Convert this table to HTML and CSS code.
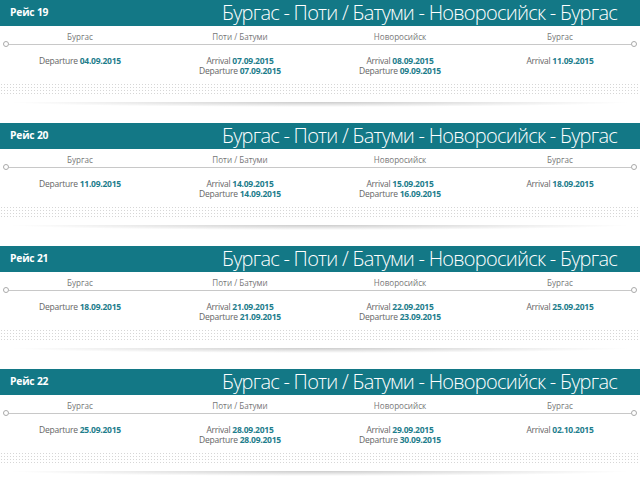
FILE: index.html
```html
<!DOCTYPE html>
<html lang="ru">
<head>
<meta charset="utf-8">
<link rel="stylesheet" href="styles.css">
</head>
<body>
<div class="trips">
  <section class="trip">
    <header class="trip-head"><span class="trip-no">Рейс 19</span><span class="trip-route">Бургас - Поти / Батуми - Новоросийск - Бургас</span></header>
    <div class="ports"><span>Бургас</span><span>Поти / Батуми</span><span>Новоросийск</span><span>Бургас</span></div>
    <div class="track"><i class="dot"></i><i class="line"></i><i class="dot"></i></div>
    <div class="dates">
      <div>Departure <b>04.09.2015</b></div>
      <div>Arrival <b>07.09.2015</b><br>Departure <b>07.09.2015</b></div>
      <div>Arrival <b>08.09.2015</b><br>Departure <b>09.09.2015</b></div>
      <div>Arrival <b>11.09.2015</b></div>
    </div>
    <div class="dots"></div>
    <div class="shadow"></div>
  </section>
  <section class="trip">
    <header class="trip-head"><span class="trip-no">Рейс 20</span><span class="trip-route">Бургас - Поти / Батуми - Новоросийск - Бургас</span></header>
    <div class="ports"><span>Бургас</span><span>Поти / Батуми</span><span>Новоросийск</span><span>Бургас</span></div>
    <div class="track"><i class="dot"></i><i class="line"></i><i class="dot"></i></div>
    <div class="dates">
      <div>Departure <b>11.09.2015</b></div>
      <div>Arrival <b>14.09.2015</b><br>Departure <b>14.09.2015</b></div>
      <div>Arrival <b>15.09.2015</b><br>Departure <b>16.09.2015</b></div>
      <div>Arrival <b>18.09.2015</b></div>
    </div>
    <div class="dots"></div>
    <div class="shadow"></div>
  </section>
  <section class="trip">
    <header class="trip-head"><span class="trip-no">Рейс 21</span><span class="trip-route">Бургас - Поти / Батуми - Новоросийск - Бургас</span></header>
    <div class="ports"><span>Бургас</span><span>Поти / Батуми</span><span>Новоросийск</span><span>Бургас</span></div>
    <div class="track"><i class="dot"></i><i class="line"></i><i class="dot"></i></div>
    <div class="dates">
      <div>Departure <b>18.09.2015</b></div>
      <div>Arrival <b>21.09.2015</b><br>Departure <b>21.09.2015</b></div>
      <div>Arrival <b>22.09.2015</b><br>Departure <b>23.09.2015</b></div>
      <div>Arrival <b>25.09.2015</b></div>
    </div>
    <div class="dots"></div>
    <div class="shadow"></div>
  </section>
  <section class="trip">
    <header class="trip-head"><span class="trip-no">Рейс 22</span><span class="trip-route">Бургас - Поти / Батуми - Новоросийск - Бургас</span></header>
    <div class="ports"><span>Бургас</span><span>Поти / Батуми</span><span>Новоросийск</span><span>Бургас</span></div>
    <div class="track"><i class="dot"></i><i class="line"></i><i class="dot"></i></div>
    <div class="dates">
      <div>Departure <b>25.09.2015</b></div>
      <div>Arrival <b>28.09.2015</b><br>Departure <b>28.09.2015</b></div>
      <div>Arrival <b>29.09.2015</b><br>Departure <b>30.09.2015</b></div>
      <div>Arrival <b>02.10.2015</b></div>
    </div>
    <div class="dots"></div>
    <div class="shadow"></div>
  </section>
</div>
</body>
</html>
```
FILE: styles.css
```css
* { box-sizing: border-box; }
html, body { margin: 0; padding: 0; background: #fff; }
body { font-family: "Open Sans", "Noto Sans", sans-serif; color: #666; width: 640px; overflow: hidden; }
.trips { display: flex; flex-direction: column; }
.trip { height: 123px; display: flex; flex-direction: column; }
.trip-head {
  height: 26px;
  background: #137886;
  color: #fff;
  display: flex;
  align-items: center;
  justify-content: space-between;
  padding: 0 23px 0 10px;
  white-space: nowrap;
}
.trip-no { font-size: 10.3px; font-weight: 700; letter-spacing: -0.2px; margin-top: -3px; }
.trip-route { font-size: 20px; font-weight: 300; letter-spacing: -0.75px; margin-top: -1px; line-height: 26px; }
.ports {
  display: grid;
  grid-template-columns: repeat(4, 1fr);
  text-align: center;
  font-size: 8.1px;
  color: #777;
  padding-top: 6px;
  height: 15px;
  line-height: 10px;
}
.track { display: flex; align-items: center; height: 6px; padding: 0 3px; }
.track .dot { width: 6px; height: 6px; border: 1px solid #aaa; border-radius: 50%; background: #fff; flex: none; }
.track .line { flex: 1; height: 1px; background: #c8c8c8; }
.dates {
  display: grid;
  grid-template-columns: repeat(4, 1fr);
  text-align: center;
  font-size: 8.5px;
  line-height: 10px;
  letter-spacing: -0.25px;
  color: #666;
  padding-top: 9px;
  height: 36px;
}
.dates b { color: #1d7d8c; font-weight: 700; }
.dots {
  height: 12px;
  background-image: radial-gradient(circle, #d6d6d6 0.7px, transparent 0.9px);
  background-size: 3px 3px;
}
.shadow {
  margin-top: 7px;
  height: 5px;
  margin-left: 8px;
  margin-right: 8px;
  background: radial-gradient(ellipse 50% 100% at 50% 0%, rgba(0,0,0,0.2), rgba(0,0,0,0) 100%);
}
```
